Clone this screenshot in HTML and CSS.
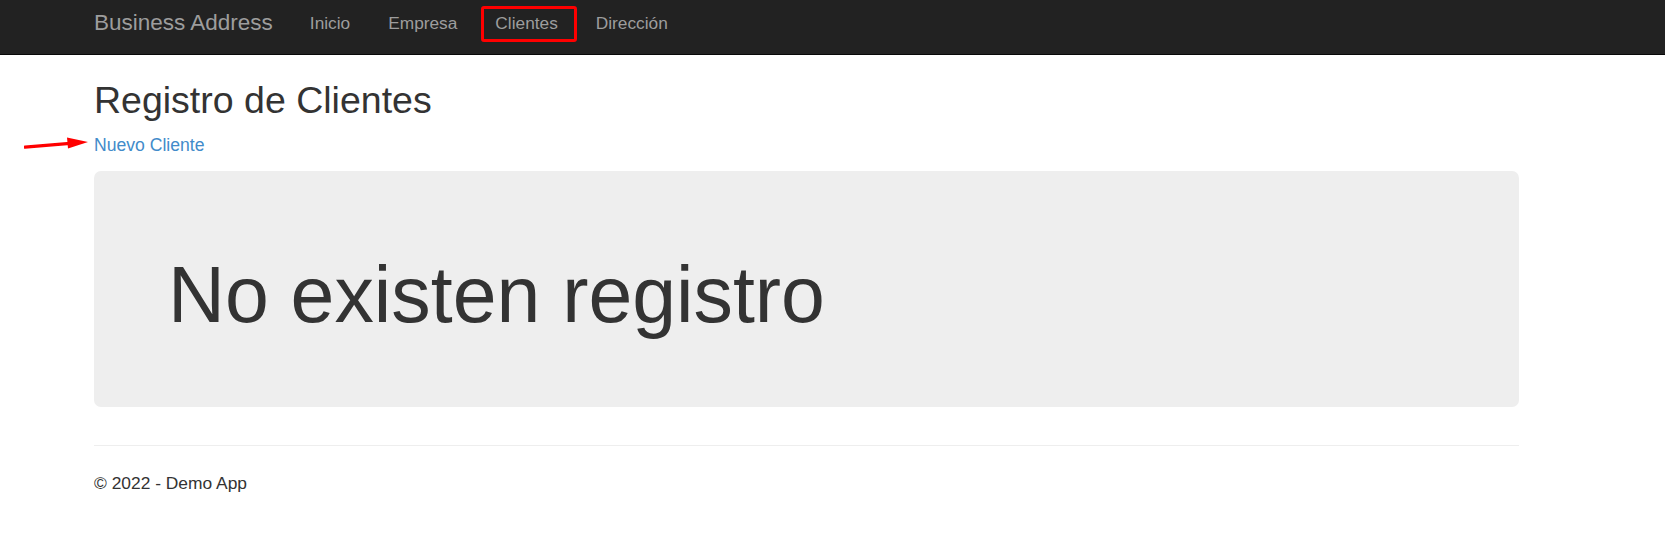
FILE: index.html
```html
<!DOCTYPE html>
<html lang="es">
<head>
<meta charset="utf-8">
<title>Registro de Clientes - Business Address</title>
<link rel="stylesheet" href="styles.css">
</head>
<body>
<header class="navbar">
  <div class="navbar-inner">
    <a class="brand" href="#">Business Address</a>
    <ul class="nav">
      <li><a href="#">Inicio</a></li>
      <li><a href="#">Empresa</a></li>
      <li class="marked"><a href="#">Clientes</a><span class="mark-box"></span></li>
      <li><a href="#">Dirección</a></li>
    </ul>
  </div>
</header>
<svg class="arrow" width="70" height="20" viewBox="0 0 70 20">
  <path d="M1 14.2 L46 10.4" stroke="#ff0000" stroke-width="3.2" stroke-linecap="round" fill="none"/>
  <path d="M43 4.5 L64 9 L44 15.5 Z" fill="#ff0000"/>
</svg>
<main class="container">
  <h2 class="title">Registro de Clientes</h2>
  <p class="action"><a href="#">Nuevo Cliente</a></p>
  <div class="jumbotron">
    <h1 class="empty">No existen registro</h1>
  </div>
  <hr class="rule">
  <footer class="footer">
    <p>© 2022 - Demo App</p>
  </footer>
</main>
</body>
</html>
```
FILE: styles.css
```css
html, body {
  margin: 0;
  padding: 0;
}
body {
  font-family: "Liberation Sans", Arial, Helvetica, sans-serif;
  font-size: 17.4px;
  line-height: 24px;
  color: #333333;
  background: #ffffff;
  position: relative;
}
a {
  color: #428bca;
  text-decoration: none;
}

.navbar {
  background: #222222;
  border-bottom: 1px solid #080808;
  height: 54px;
}
.navbar-inner {
  margin-left: 94px;
  display: flex;
  align-items: flex-start;
  height: 54px;
}
.brand {
  color: #9d9d9d;
  font-size: 22.5px;
  line-height: 24px;
  padding: 10.5px 18px 0 0;
}
.nav {
  list-style: none;
  margin: 0;
  padding: 0;
  display: flex;
}
.nav li {
  position: relative;
}
.nav a {
  display: block;
  color: #9d9d9d;
  font-size: 17.3px;
  line-height: 24px;
  padding: 10.5px 19px 0 19px;
  height: 43px;
}
.mark-box {
  position: absolute;
  top: 6px;
  left: 4.5px;
  width: 90px;
  height: 30px;
  border: 3px solid #ff0000;
  border-radius: 3px;
}

.arrow {
  position: absolute;
  left: 24px;
  top: 133px;
}

.container {
  margin-left: 94px;
  width: 1425px;
}
.title {
  margin: 25px 0 0 0;
  font-size: 37.5px;
  font-weight: 500;
  line-height: 41px;
  color: #333333;
}
.action {
  margin: 11.5px 0 0 0;
  font-size: 17.6px;
  line-height: 24px;
}
.jumbotron {
  margin-top: 14px;
  background: #eeeeee;
  border-radius: 7px;
  height: 236px;
  box-sizing: border-box;
  padding: 81px 72px 0 74px;
}
.empty {
  margin: 0;
  font-size: 78.8px;
  font-weight: 500;
  line-height: 86px;
  color: #333333;
}
.rule {
  margin: 38px 0 0 0;
  border: 0;
  border-top: 1px solid #eeeeee;
  height: 0;
}
.footer p {
  margin: 25px 0 0 0;
  line-height: 24px;
}
```
